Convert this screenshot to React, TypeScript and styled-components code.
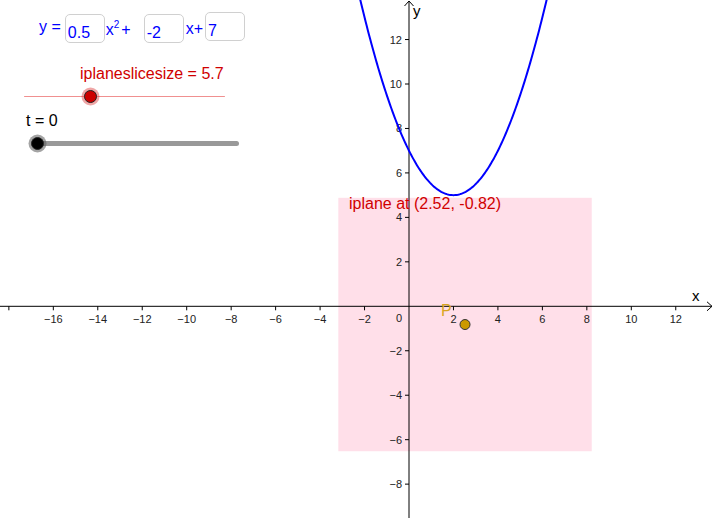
import React from 'react'
import styled, { createGlobalStyle } from 'styled-components'

const GlobalStyle = createGlobalStyle`
  html, body {
    margin: 0;
    padding: 0;
    background: #fff;
  }
  body {
    font-family: "Liberation Sans", Arial, sans-serif;
  }
`

// graph view: origin and pixels per unit
const S = 22.23
const OX = 409
const OY = 306.3
const px = (u: number) => OX + u * S
const py = (v: number) => OY - v * S

const fmt = (n: number) => (n < 0 ? '\u2212' + Math.abs(n) : String(n))

const a = 0.5
const b = -2
const c = 7
const sliceSize = 5.7
const P = { x: 2.52, y: -0.82 }

const Canvas = styled.div`
  position: relative;
  width: 713px;
  height: 518px;
  overflow: hidden;
  background: #fff;
`

const Graph = styled.svg`
  display: block;
  font-family: "Liberation Sans", Arial, sans-serif;
`

const Panel = styled.div`
  position: absolute;
  top: 0;
  left: 0;
  width: 260px;
  padding-top: 12px;
  font-size: 16px;
  line-height: 18px;
`

const EquationRow = styled.div`
  display: flex;
  align-items: flex-start;
  padding-left: 39px;
  height: 31px;
  color: #0000ff;
`

const Term = styled.span<{ $top?: number; $left?: number; $right?: number }>`
  margin-top: ${p => p.$top ?? 8}px;
  margin-left: ${p => p.$left ?? 0}px;
  margin-right: ${p => p.$right ?? 0}px;
  white-space: pre;
`

const Sup = styled.sup`
  font-size: 10px;
  line-height: 10px;
  vertical-align: 7px;
  margin: 0 2px 0 0;
`

const InputBox = styled.input<{ $top?: number }>`
  box-sizing: border-box;
  width: 40px;
  height: 29px;
  margin: ${p => p.$top ?? 2}px 0 0;
  padding: 9px 2px 0;
  border: 1px solid #d0d0d0;
  border-radius: 5px;
  background: #fff;
  color: #0000ff;
  font-family: "Liberation Sans", Arial, sans-serif;
  font-size: 16px;
  line-height: 18px;
  outline: none;
`

const SliderBlock = styled.div<{ $gap: number }>`
  margin-top: ${p => p.$gap}px;
`

const SliderLabel = styled.div<{ $left: number; $color: string }>`
  padding-left: ${p => p.$left}px;
  color: ${p => p.$color};
  white-space: nowrap;
`

const TrackArea = styled.div<{ $left: number; $width: number }>`
  position: relative;
  margin: 5px 0 0 ${p => p.$left}px;
  width: ${p => p.$width}px;
  height: 16px;
  display: flex;
  align-items: center;
`

const Track = styled.div<{ $thick: number; $color: string }>`
  width: 100%;
  height: ${p => p.$thick}px;
  border-radius: ${p => p.$thick / 2}px;
  background: ${p => p.$color};
`

const Knob = styled.div<{ $fill: string; $halo: string }>`
  position: absolute;
  top: 50%;
  width: 11px;
  height: 11px;
  margin: -6.5px 0 0 -6.5px;
  border-radius: 50%;
  background: ${p => p.$fill};
  border: 1px solid #222;
  box-shadow: 0 0 0 2.5px ${p => p.$halo};
`

type SliderProps = {
  label: string
  labelLeft: number
  color: string
  trackLeft: number
  trackWidth: number
  thick: number
  trackColor: string
  knobFill: string
  knobHalo: string
  value: number
  min: number
  max: number
  gap: number
}

const Slider = (props: SliderProps) => {
  const f = (props.value - props.min) / (props.max - props.min)
  return (
    <SliderBlock $gap={props.gap}>
      <SliderLabel $left={props.labelLeft} $color={props.color}>{props.label}</SliderLabel>
      <TrackArea $left={props.trackLeft} $width={props.trackWidth}>
        <Track $thick={props.thick} $color={props.trackColor} />
        <Knob $fill={props.knobFill} $halo={props.knobHalo} style={{ left: `${f * 100}%` }} />
      </TrackArea>
    </SliderBlock>
  )
}

const curvePath = () => {
  const pts: string[] = []
  for (let u = -2.4; u <= 6.4; u += 0.05) {
    pts.push(`${px(u).toFixed(2)},${py(a * u * u + b * u + c).toFixed(2)}`)
  }
  return 'M' + pts.join(' L')
}

const xTicks = Array.from({ length: 16 }, (_, i) => -18 + i * 2).filter(u => u !== 0)
const yTicks = Array.from({ length: 11 }, (_, i) => -8 + i * 2).filter(v => v !== 0)

const GraphView = () => (
  <Graph width={713} height={518} viewBox="0 0 713 518">
    <rect
      x={px(P.x - sliceSize)}
      y={py(P.y + sliceSize)}
      width={sliceSize * 2 * S}
      height={sliceSize * 2 * S}
      fill="#ffdfe9"
    />
    {/* axes */}
    <line x1={0} y1={OY} x2={712} y2={OY} stroke="#000" strokeWidth={1} />
    <line x1={OX} y1={1} x2={OX} y2={518} stroke="#000" strokeWidth={1} />
    <polyline points={`${707},${OY - 4.5} 712,${OY} ${707},${OY + 4.5}`} fill="none" stroke="#000" strokeWidth={1} />
    <polyline points={`${OX - 4.5},6 ${OX},1 ${OX + 4.5},6`} fill="none" stroke="#000" strokeWidth={1} />
    <text x={692} y={301} fontSize={15} fill="#000">x</text>
    <text x={413} y={16} fontSize={15} fill="#000">y</text>
    {xTicks.map(u => (
      <g key={u}>
        <line x1={px(u)} y1={OY} x2={px(u)} y2={OY + 4} stroke="#000" strokeWidth={1} />
        {u >= -16 && (
          <text x={px(u)} y={323} fontSize={11} fill="#222" textAnchor="middle">{fmt(u)}</text>
        )}
      </g>
    ))}
    {yTicks.map(v => (
      <g key={v}>
        <line x1={OX - 4} y1={py(v)} x2={OX} y2={py(v)} stroke="#000" strokeWidth={1} />
        <text x={402} y={py(v) + 4} fontSize={11} fill="#222" textAnchor="end">{fmt(v)}</text>
      </g>
    ))}
    <text x={402} y={322} fontSize={11} fill="#222" textAnchor="end">0</text>
    <path d={curvePath()} fill="none" stroke="#0000ff" strokeWidth={2} />
    <text x={349} y={209} fontSize={16} fill="#d00000">
      iplane at ({P.x}, {P.y})
    </text>
    <text x={441} y={316} fontSize={16} fill="#d9a520">P</text>
    <circle cx={px(P.x)} cy={py(P.y)} r={5} fill="#cc9900" stroke="#333" strokeWidth={1} />
  </Graph>
)

export default function App() {
  return (
    <>
      <GlobalStyle />
      <Canvas>
        <GraphView />
        <Panel>
          <EquationRow>
            <Term $top={6} $right={4}>y =</Term>
            <InputBox readOnly defaultValue={String(a)} />
            <Term $left={1} $right={13}>x<Sup>2</Sup>+</Term>
            <InputBox readOnly defaultValue={String(b)} />
            <Term $left={2} $right={2}>x+</Term>
            <InputBox readOnly defaultValue={String(c)} $top={0} />
          </EquationRow>
          <Slider
            label={`iplaneslicesize = ${sliceSize}`}
            labelLeft={80}
            color="#d00000"
            trackLeft={24}
            trackWidth={201}
            thick={1}
            trackColor="#f09090"
            knobFill="#cc0000"
            knobHalo="rgba(220, 60, 60, 0.45)"
            value={sliceSize}
            min={0}
            max={17.1}
            gap={22}
          />
          <Slider
            label="t = 0"
            labelLeft={26}
            color="#000"
            trackLeft={37}
            trackWidth={202}
            thick={5}
            trackColor="#999"
            knobFill="#000"
            knobHalo="rgba(90, 90, 90, 0.55)"
            value={0}
            min={0}
            max={10}
            gap={8}
          />
        </Panel>
      </Canvas>
    </>
  )
}
